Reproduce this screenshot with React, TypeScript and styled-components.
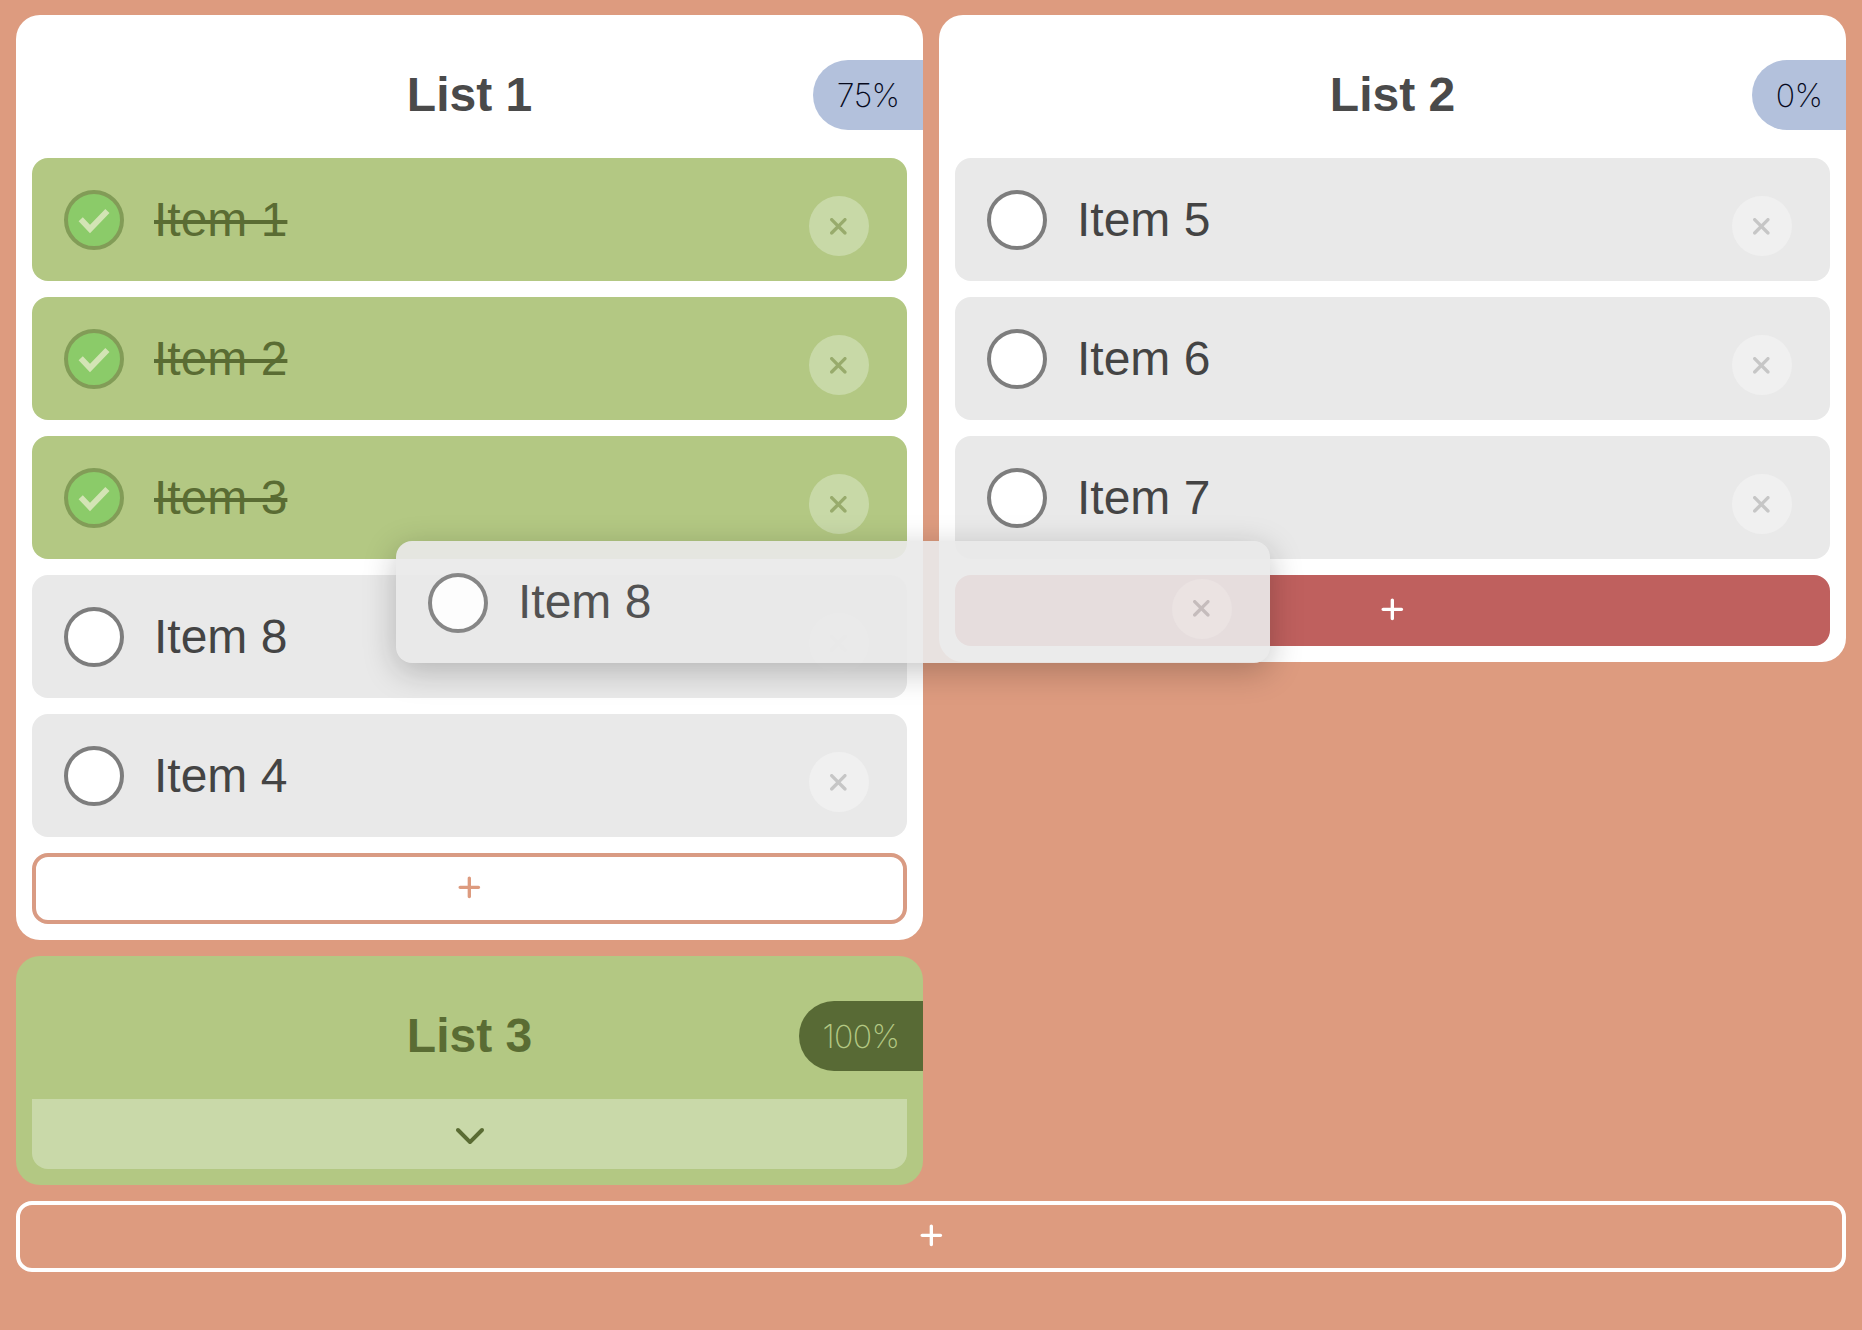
import React from "react";
import styled, { createGlobalStyle, css } from "styled-components";
import { FaPlus, FaXmark, FaChevronDown } from "react-icons/fa6";

const GlobalStyle = createGlobalStyle`
  *, *::before, *::after { box-sizing: border-box; }
  html, body { margin: 0; background: #dd9b7f; }
  body {
    min-height: 100vh;
    font-family: "Liberation Sans", Arial, sans-serif;
    color: #444;
    overflow: hidden;
  }
  button { font: inherit; color: inherit; margin: 0; padding: 0; border: 0; }
  svg { display: block; }
`;

const Page = styled.main`
  display: flex;
  flex-direction: column;
  gap: 16px;
  padding: 15px 16px;
`;

const Columns = styled.div`
  display: grid;
  grid-template-columns: 1fr 1fr;
  align-items: start;
  gap: 16px;
`;

const Column = styled.div`
  display: flex;
  flex-direction: column;
  gap: 16px;
`;

const Card = styled.section<{ $complete?: boolean }>`
  display: flex;
  flex-direction: column;
  padding: 0 16px 16px;
  border-radius: 24px;
  background: ${(p) => (p.$complete ? "#b3c883" : "#fff")};
  color: ${(p) => (p.$complete ? "#5a6c33" : "#4a4a4a")};
`;

const CardHeader = styled.header`
  display: grid;
  grid-template-columns: 1fr auto 1fr;
  align-items: center;
  height: 143px;
  margin: 0 -16px;
  padding-top: 17px;
`;

const Title = styled.h2`
  grid-column: 2;
  margin: 0;
  font-size: 48px;
  line-height: 56px;
  font-weight: 700;
`;

const Badge = styled.span<{ $complete?: boolean }>`
  justify-self: end;
  height: 70px;
  padding: 0 23.5px 0 24px;
  border-radius: 35px 0 0 35px;
  background: ${(p) => (p.$complete ? "#586a35" : "#b3c1dc")};
  color: ${(p) => (p.$complete ? "#b3c883" : "#06091c")};
  font-family: Inter, sans-serif;
  font-size: 32px;
  font-weight: 240;
  letter-spacing: -0.6px;
  line-height: 72px;
`;

const Items = styled.ul`
  display: flex;
  flex-direction: column;
  gap: 16px;
  margin: 0 0 16px;
  padding: 0;
  list-style: none;
`;

const doneRow = css`
  background: #b3c883;
  color: #5a6c33;
`;

const Row = styled.li<{ $done?: boolean }>`
  display: flex;
  align-items: center;
  height: 123px;
  padding: 0 38px 0 32px;
  border-radius: 16px;
  background: #e9e9e9;
  color: #444;
  ${(p) => p.$done && doneRow}
`;

const DraggedRow = styled(Row).attrs({ as: "div" })`
  position: absolute;
  left: 396px;
  top: 541px;
  width: 874px;
  height: 122px;
  opacity: 0.91;
  background: #eaeaea;
  box-shadow: 0 8px 32px rgba(0, 0, 0, 0.25);
`;

const Check = styled.span<{ $done?: boolean }>`
  display: grid;
  place-items: center;
  flex: none;
  width: 60px;
  height: 60px;
  margin-top: 1px;
  border: 4px solid ${(p) => (p.$done ? "#829c57" : "#7d7d7d")};
  border-radius: 50%;
  background: ${(p) => (p.$done ? "#8bcb69" : "#fff")};
`;

const Label = styled.span<{ $done?: boolean }>`
  flex: 1;
  margin-left: 30px;
  font-size: 48px;
  line-height: 56px;
  text-decoration: ${(p) => (p.$done ? "line-through" : "none")};
  text-decoration-thickness: 4px;
`;

const Remove = styled.button<{ $done?: boolean; $faded?: boolean }>`
  display: grid;
  place-items: center;
  flex: none;
  width: 60px;
  height: 60px;
  margin-top: 13px;
  padding-right: 1px;
  border-radius: 50%;
  background: ${(p) => (p.$done ? "#c8d9a7" : "#f0f0f0")};
  color: ${(p) => (p.$done ? "#98ab6c" : "#c6c6c6")};
  font-size: 26.67px;
  opacity: ${(p) => (p.$faded ? 0.25 : 1)};
`;

const AddButton = styled.button<{ $tone: "outline" | "over" | "light" }>`
  display: grid;
  place-items: center;
  height: 71px;
  padding-bottom: 2px;
  border: 4px solid;
  border-radius: 16px;
  font-size: 26.67px;
  ${(p) =>
    p.$tone === "outline" &&
    css`
      border-color: #d99b83;
      background: #fff;
      color: #dd9b7f;
    `}
  ${(p) =>
    p.$tone === "over" &&
    css`
      border-color: #bf605e;
      background: #bf605e;
      color: #fff;
    `}
  ${(p) =>
    p.$tone === "light" &&
    css`
      border-color: #fff;
      background: transparent;
      color: #fff;
    `}
`;

const Expand = styled.button`
  display: grid;
  place-items: center;
  height: 70px;
  padding-bottom: 1px;
  border-radius: 0 0 16px 16px;
  background: #c9d9a9;
  color: #5a6c33;
  font-size: 32px;
`;

const CheckMark = () => (
  <svg width="52" height="52" viewBox="0 0 52 52" aria-hidden="true">
    <path d="M12.7 25.3 L22 35 L39.4 17" fill="none" stroke="#d3e4b5" strokeWidth="5.8" />
  </svg>
);

type Entry = { name: string; done?: boolean; dragging?: boolean };

const RowContent = ({ name, done, dragging }: Entry) => (
  <>
    <Check $done={done}>{done && <CheckMark />}</Check>
    <Label $done={done}>{name}</Label>
    <Remove $done={done} $faded={dragging} aria-label={`Remove ${name}`}>
      <FaXmark />
    </Remove>
  </>
);

const Header = ({ title, percent }: { title: string; percent: number }) => (
  <CardHeader>
    <Title>{title}</Title>
    <Badge $complete={percent === 100}>{percent}%</Badge>
  </CardHeader>
);

const TodoList = ({ title, percent, items, over }: { title: string; percent: number; items: Entry[]; over?: boolean }) => (
  <Card>
    <Header title={title} percent={percent} />
    <Items>
      {items.map((item) => (
        <Row key={item.name} $done={item.done}>
          <RowContent {...item} />
        </Row>
      ))}
    </Items>
    <AddButton $tone={over ? "over" : "outline"} aria-label="Add item">
      <FaPlus />
    </AddButton>
  </Card>
);

const first: Entry[] = [
  { name: "Item 1", done: true },
  { name: "Item 2", done: true },
  { name: "Item 3", done: true },
  { name: "Item 8", dragging: true },
  { name: "Item 4" },
];
const second: Entry[] = [{ name: "Item 5" }, { name: "Item 6" }, { name: "Item 7" }];

export default function App() {
  return (
    <>
      <GlobalStyle />
      <Page>
        <Columns>
          <Column>
            <TodoList title="List 1" percent={75} items={first} />
            <Card $complete>
              <Header title="List 3" percent={100} />
              <Expand aria-label="Expand">
                <FaChevronDown />
              </Expand>
            </Card>
          </Column>
          <Column>
            <TodoList title="List 2" percent={0} items={second} over />
          </Column>
        </Columns>
        <AddButton $tone="light" aria-label="Add list">
          <FaPlus />
        </AddButton>
      </Page>
      <DraggedRow>
        <RowContent name="Item 8" />
      </DraggedRow>
    </>
  );
}
